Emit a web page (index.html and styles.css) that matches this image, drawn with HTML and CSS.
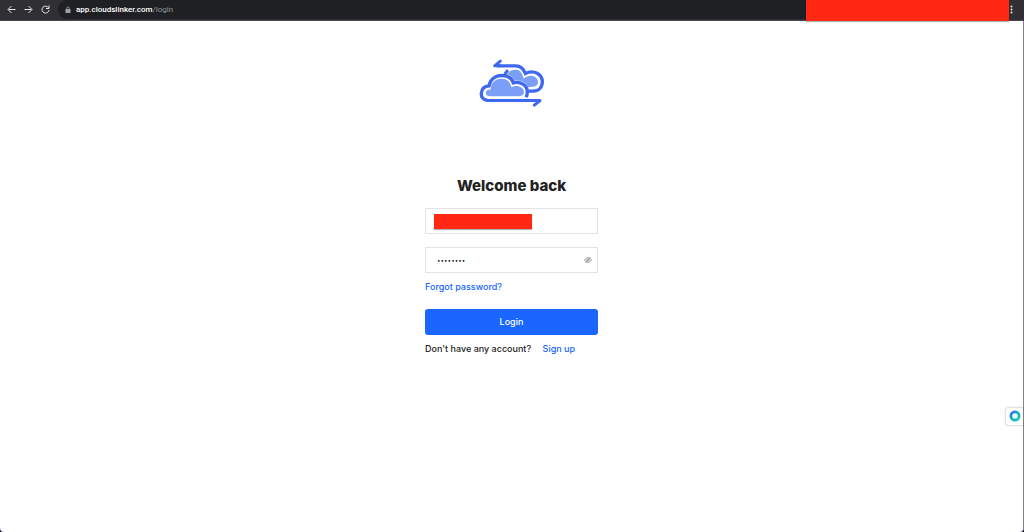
FILE: index.html
```html
<!DOCTYPE html>
<html lang="en">
<head>
    <meta charset="UTF-8">
    <meta name="viewport" content="width=device-width, initial-scale=1.0">
    <title>Cloudslinker - Login</title>
    <link rel="stylesheet" href="styles.css">
</head>
<body>
    <header class="browser-bar">
        <nav class="browser-nav">
            <button type="button" class="bar-btn" aria-label="Back">
                <svg width="9" height="9" viewBox="0 0 18 18"><path d="M17 9H3M9 2L2 9l7 7"/></svg>
            </button>
            <button type="button" class="bar-btn" aria-label="Forward">
                <svg width="9" height="9" viewBox="0 0 18 18"><path d="M1 9h14M9 2l7 7-7 7"/></svg>
            </button>
            <button type="button" class="bar-btn" aria-label="Reload">
                <svg width="9" height="9" viewBox="0 0 18 18"><path d="M15 5.500A7 7 0 1 0 16 10M16 1v6h-6"/></svg>
            </button>
        </nav>
        <div class="address">
            <svg class="lock" width="6" height="8" viewBox="0 0 12 16"><path d="M3.500 7V4.500a2.500 2.500 0 0 1 5 0V7" fill="none" stroke="#9aa0a6" stroke-width="1.600"/><rect x="1" y="6" width="10" height="8" rx="1" fill="#9aa0a6"/></svg>
            <span class="url">app.cloudslinker.com<span class="url-path">/login</span></span>
        </div>
        <div class="bar-mask"></div>
        <button type="button" class="bar-menu" aria-label="Menu">
            <svg width="3" height="9" viewBox="0 0 3 9"><circle cx="1.500" cy="1.500" r="1"/><circle cx="1.500" cy="4.500" r="1"/><circle cx="1.500" cy="7.500" r="1"/></svg>
        </button>
    </header>

    <main class="page">
        <svg class="logo" viewBox="26 28 198 146" aria-label="Cloudslinker">
            <!-- back cloud -->
            <path d="M110 73C116 64 124 60 136 60C148 60 155 67 160 86C178 70 203 79 203 96C203 106 196 111 186 111L173 112C169 101 157 92 141 92H131C127 81 120 75 110 73Z" fill="#7b9ff6"/>
            <path d="M103 78C104 71 108 65 113 61" fill="none" stroke="#3e68f0" stroke-width="9"/>
            <path d="M80 48H136C152 48 160 57 165 71C191 58 216 73 216 96C216 113 205 124 188 124H174" fill="none" stroke="#3e68f0" stroke-width="10"/>
            <path d="M90 34L73 48H88" fill="none" stroke="#3e68f0" stroke-width="9" stroke-linecap="round" stroke-linejoin="round"/>
            <!-- front cloud -->
            <path d="M52 152C38 151 32 141 33 130C34 117 43 109 56 108C60 88 76 77 95 77C112 77 124 85 129 99C150 93 171 106 171 126C171 132 170 136 168 142" fill="#fff" stroke="#3e68f0" stroke-width="10"/>
            <path d="M57 139C42 139 42 119 61 118C63 96 77 87 94 87C111 87 120 98 123 112C141 103 160 112 161 126C161 135 155 139 146 139Z" fill="#7b9ff6"/>
            <path d="M52 152H209L192 166" fill="none" stroke="#3e68f0" stroke-width="9" stroke-linecap="round" stroke-linejoin="round"/>
        </svg>

        <form class="login-form">
            <h1>Welcome back</h1>
            <div class="field">
                <input type="email" class="text-input" aria-label="Email">
                <span class="field-mask"></span>
            </div>
            <div class="field">
                <input type="password" class="text-input password" aria-label="Password" value="password">
                <button type="button" class="eye" aria-label="Show password">
                    <svg width="8" height="8" viewBox="0 0 16 16"><path d="M1 8c3-6 11-6 14 0c-3 6-11 6-14 0z"/><circle cx="8" cy="8" r="2.500"/><path d="M3 14L13 2"/></svg>
                </button>
            </div>
            <a href="#" class="forgot">Forgot password?</a>
            <button type="submit" class="login-btn">Login</button>
            <p class="signup">Don't have any account? <a href="#">Sign up</a></p>
        </form>
    </main>

    <button type="button" class="widget" aria-label="Open assistant">
        <svg width="12" height="12" viewBox="0 0 12 12">
            <defs>
                <linearGradient id="ring" x1="0" y1="0" x2="1" y2="1">
                    <stop offset="0" stop-color="#3553e8"/>
                    <stop offset="0.500" stop-color="#16aed0"/>
                    <stop offset="1" stop-color="#16d69a"/>
                </linearGradient>
            </defs>
            <circle cx="6" cy="6" r="5.500" fill="url(#ring)"/>
            <circle cx="6" cy="6" r="3" fill="#a9e4f3"/>
            <circle cx="6" cy="6" r="2" fill="#fff"/>
        </svg>
    </button>
</body>
</html>
```

FILE: styles.css
```css
* {
    box-sizing: border-box;
}
html {
    background: #0b0820;
}
body {
    margin: 0;
    min-height: 100vh;
    display: flex;
    flex-direction: column;
    font-family: Inter, "Liberation Sans", sans-serif;
    font-size: 9px;
    font-weight: 500;
    line-height: 14px;
    color: #222;
}
button {
    padding: 0;
    border: none;
    background: none;
    font: inherit;
    cursor: pointer;
}
svg {
    display: block;
}
a {
    color: #1765ff;
    text-decoration: none;
}

/* browser toolbar */
.browser-bar {
    position: relative;
    display: flex;
    height: 21px;
    background: #302f34;
    border-bottom: 1px solid #47464b;
}
.browser-nav {
    display: flex;
    align-items: center;
    gap: 8px;
    padding: 0 8px 0 7px;
    height: 18px;
}
.bar-btn svg {
    fill: none;
    stroke: #e4e5e8;
    stroke-width: 2;
}
.address {
    flex: 1;
    display: flex;
    align-items: center;
    gap: 5px;
    height: 19px;
    padding-left: 7px;
    border-radius: 10px 0 0 10px;
    background: #1f2023;
}
.url {
    font-family: Roboto, sans-serif;
    font-size: 8px;
    font-weight: 500;
    color: #fff;
}
.url-path {
    font-weight: 400;
    color: #95979b;
}
.bar-mask {
    width: 203px;
    height: 21px;
    background: #ff2813;
    box-shadow: 0 1px 1px rgba(0, 0, 0, 0.3);
}
.bar-menu {
    width: 15px;
    height: 19px;
    padding-left: 1px;
}
.bar-menu svg {
    fill: #e4e5e8;
}

/* login page */
.page {
    flex: 1;
    display: flex;
    flex-direction: column;
    align-items: center;
    padding-top: 38px;
    background: #fff;
    border-right: 1px solid #848484;
    border-radius: 0 0 4px 4px;
}
.logo {
    width: 66px;
    height: 49px;
}
.login-form {
    width: 173px;
    margin-top: 68px;
}
.login-form h1 {
    margin: 0 0 12px;
    font-size: 15px;
    line-height: 20px;
    font-weight: 800;
    text-align: center;
}
.field {
    position: relative;
    margin-bottom: 13px;
}
.text-input {
    display: block;
    width: 100%;
    height: 26px;
    padding: 0 24px 0 11px;
    border: 1px solid #e3e3e3;
    border-radius: 0;
    background: #fff;
    font: inherit;
    color: #000;
    outline: none;
}
.password {
    font-family: "DejaVu Sans", sans-serif;
    font-size: 6px;
}
.field-mask {
    position: absolute;
    top: 6px;
    left: 9px;
    width: 98px;
    height: 15px;
    background: #ff2813;
    box-shadow: 0 1px 1px rgba(0, 0, 0, 0.3);
}
.eye {
    position: absolute;
    top: 9px;
    right: 6px;
}
.eye svg {
    fill: none;
    stroke: #888;
    stroke-width: 1.5;
}
.forgot {
    display: block;
    margin-top: -6px;
}
.login-btn {
    display: block;
    width: 100%;
    height: 26px;
    margin: 15px 0 7px;
    border-radius: 3px;
    background: #1a66ff;
    color: #fff;
}
.signup {
    margin: 0;
}
.signup a {
    margin-left: 9px;
}

/* assistant tab docked on the right edge */
.widget {
    position: fixed;
    top: 407px;
    right: 1px;
    padding: 2px 2px 3px 3px;
    border: 1px solid #e2e2e2;
    border-right: none;
    border-radius: 4px 0 0 4px;
    background: #fff;
    box-shadow: 0 0 2px rgba(0, 0, 0, 0.15);
}
```
